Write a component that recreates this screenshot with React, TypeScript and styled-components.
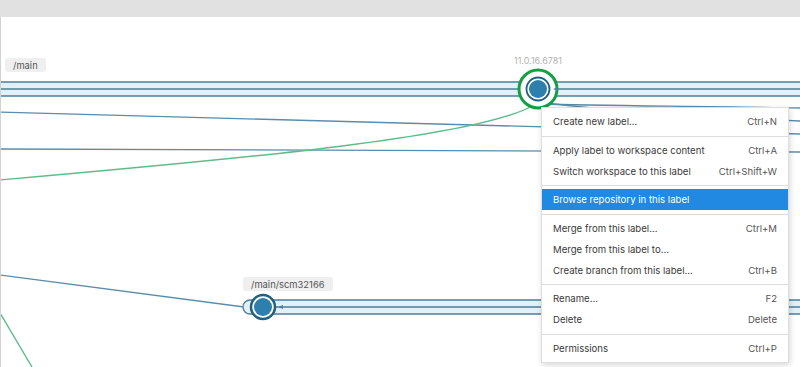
import styled, { createGlobalStyle } from "styled-components";

const GlobalStyle = createGlobalStyle`
  html, body {
    margin: 0;
    padding: 0;
    background: #ffffff;
    font-family: Inter, "Noto Sans", sans-serif;
  }
`

const LANE = "#4b7f9c";
const LANE_FILL = "#e3f0f8";
const NODE = "#2d80ad";
const NODE_RING = "#22607f";
const RING_GREEN = "#13a043";
const CURVE_GREEN = "#5cbd8a";
const EDGE = "#5a8cab";

const Frame = styled.div`
  width: 800px;
  height: 367px;
  display: flex;
  flex-direction: column;
  overflow: hidden;
`

const TitleBar = styled.div`
  height: 17px;
  flex: none;
  background: #e1e1e1;
`

const Canvas = styled.div`
  flex: 1;
  position: relative;
  background: #ffffff;
  border-left: 1px solid #d2d2d2;
  overflow: hidden;
`

const Graph = styled.svg`
  position: absolute;
  left: 0;
  top: 0;
  display: block;
`

const LabelPill = styled.div<{ $x: number; $y: number }>`
  position: absolute;
  left: ${(p) => p.$x}px;
  top: ${(p) => p.$y}px;
  height: 14px;
  padding: 0 8px;
  display: flex;
  align-items: center;
  border-radius: 3px;
  background: #efefef;
  color: #555555;
  font-size: 9.4px;
  white-space: nowrap;
`

const VersionTag = styled.div<{ $x: number; $y: number }>`
  position: absolute;
  left: ${(p) => p.$x}px;
  top: ${(p) => p.$y}px;
  transform: translateX(-50%);
  color: #b4b4b4;
  font-size: 9px;
  white-space: nowrap;
`

const Menu = styled.div`
  position: absolute;
  left: 540px;
  top: 90px;
  width: 246px;
  padding: 3px 0 3px;
  background: #ffffff;
  border: 1px solid #dedede;
  box-shadow: 1px 2px 6px rgba(0, 0, 0, 0.16);
  font-size: 9.6px;
`

const MenuItem = styled.div<{ $active?: boolean }>`
  height: 21px;
  padding: 0 11px 0 11px;
  display: flex;
  align-items: center;
  justify-content: space-between;
  color: ${(p) => (p.$active ? "#ffffff" : "#3a3a3a")};
  background: ${(p) => (p.$active ? "#2289e3" : "transparent")};
  white-space: nowrap;
`

const Shortcut = styled.span`
  color: #555555;
`

const Separator = styled.div`
  height: 1px;
  margin: 3.5px 0 3px;
  background: #dddddd;
`

type Entry = { label: string; keys?: string; active?: boolean } | "sep";

const entries: Entry[] = [
  { label: "Create new label...", keys: "Ctrl+N" },
  "sep",
  { label: "Apply label to workspace content", keys: "Ctrl+A" },
  { label: "Switch workspace to this label", keys: "Ctrl+Shift+W" },
  "sep",
  { label: "Browse repository in this label", active: true },
  "sep",
  { label: "Merge from this label...", keys: "Ctrl+M" },
  { label: "Merge from this label to..." },
  { label: "Create branch from this label...", keys: "Ctrl+B" },
  "sep",
  { label: "Rename...", keys: "F2" },
  { label: "Delete", keys: "Delete" },
  "sep",
  { label: "Permissions", keys: "Ctrl+P" },
];

function BranchGraph() {
  // page coordinates, canvas starts at y=17 and x=1
  return (
    <Graph width={799} height={350} viewBox="1 17 799 350">
      <rect x={0} y={82} width={800} height={14} fill={LANE_FILL} />
      <line x1={0} y1={82} x2={800} y2={82} stroke={LANE} strokeWidth={1.3} />
      <line x1={0} y1={89} x2={800} y2={89} stroke={LANE} strokeWidth={1.3} />
      <line x1={0} y1={96} x2={800} y2={96} stroke={LANE} strokeWidth={1.3} />

      <path d="M0 112 L800 134" stroke={EDGE} strokeWidth={1.3} fill="none" />
      <path d="M0 149 L800 152" stroke={EDGE} strokeWidth={1.3} fill="none" />
      <path d="M540 104 C600 106 700 106 800 108" stroke={EDGE} strokeWidth={1.3} fill="none" />
      <path d="M546 103 C620 112 720 118 800 121" stroke={EDGE} strokeWidth={1.3} fill="none" />
      <path d="M0 180 C250 158 480 137 534 105" stroke={CURVE_GREEN} strokeWidth={1.4} fill="none" />
      <path d="M0 275 L244 307" stroke={EDGE} strokeWidth={1.3} fill="none" />
      <path d="M0 313 L32 367" stroke={CURVE_GREEN} strokeWidth={1.4} fill="none" />

      <rect x={243} y={300} width={600} height={14} rx={7} fill={LANE_FILL} stroke={LANE} strokeWidth={1.3} />
      <line x1={256} y1={307} x2={800} y2={307} stroke={LANE} strokeWidth={1.3} />
      <polygon points="278,307 283,305 283,309" fill={LANE} />

      <circle cx={538} cy={89} r={19} fill="#ffffff" stroke={RING_GREEN} strokeWidth={3} />
      <circle cx={538} cy={89} r={11.5} fill="#ffffff" stroke={NODE_RING} strokeWidth={1.8} />
      <circle cx={538} cy={89} r={9} fill={NODE} />
      <polygon points="553,89 558,87 558,91" fill={LANE} />

      <circle cx={263} cy={307} r={12} fill="#ffffff" stroke={NODE_RING} strokeWidth={2.5} />
      <circle cx={263} cy={307} r={9} fill={NODE} />
    </Graph>
  );
}

export default function App() {
  return (
    <Frame>
      <GlobalStyle />
      <TitleBar />
      <Canvas>
        <BranchGraph />
        <LabelPill $x={4} $y={41}>/main</LabelPill>
        <VersionTag $x={537} $y={38}>11.0.16.6781</VersionTag>
        <LabelPill $x={242} $y={260}>/main/scm32166</LabelPill>
        <Menu>
          {entries.map((e, i) =>
            e === "sep" ? (
              <Separator key={i} />
            ) : (
              <MenuItem key={i} $active={e.active}>
                <span>{e.label}</span>
                {e.keys && <Shortcut>{e.keys}</Shortcut>}
              </MenuItem>
            )
          )}
        </Menu>
      </Canvas>
    </Frame>
  );
}
